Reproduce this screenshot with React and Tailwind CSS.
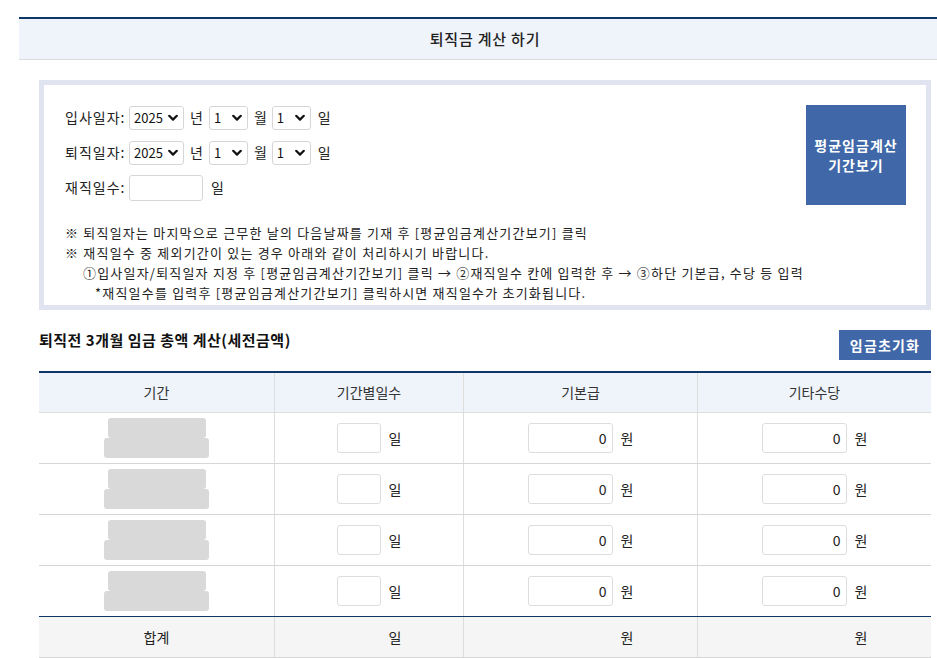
import { useState } from 'react'

const Chevron = () => (
    <svg className="pointer-events-none absolute right-[6px] top-1/2 -translate-y-1/2" width="10" height="7" viewBox="0 0 10 7">
        <path d="M1.2 1.3 L5 5.1 L8.8 1.3" fill="none" stroke="#111" strokeWidth="2.2" strokeLinecap="round" strokeLinejoin="round" />
    </svg>
)

const Select = ({ value, options, w }) => (
    <div className={`relative ${w} h-[24px]`}>
        <select
            defaultValue={value}
            className="appearance-none w-full h-full border border-[#d6d6d6] rounded-[3px] bg-white pl-[4px] text-[13px] text-[#111] leading-none focus:outline-none"
        >
            {options.map((o) => (
                <option key={o} value={o}>{o}</option>
            ))}
        </select>
        <Chevron />
    </div>
)

const years = ['2025', '2024', '2023']
const nums = Array.from({ length: 12 }, (_, i) => String(i + 1))

const DateRow = ({ label }) => (
    <div className="flex items-center h-[35px] text-[14px] text-[#222]">
        <span className="w-[64px] tracking-[1px]">{label}</span>
        <Select value="2025" options={years} w="w-[55px]" />
        <span className="mx-[6px]">년</span>
        <Select value="1" options={nums} w="w-[39px]" />
        <span className="ml-[6px] mr-[5px]">월</span>
        <Select value="1" options={nums} w="w-[39px]" />
        <span className="ml-[7px]">일</span>
    </div>
)

const Blob = () => (
    <div className="flex flex-col items-center">
        <div className="w-[98px] h-[20px] bg-[#d9d9d9] rounded-[3px]" />
        <div className="w-[105px] h-[20px] bg-[#d9d9d9] rounded-[3px]" />
    </div>
)

const MoneyCell = () => (
    <div className="flex items-center justify-center border-l border-[#dddddd]">
        <input
            defaultValue="0"
            className="w-[85px] h-[30px] border border-[#dddddd] rounded-[3px] text-right pr-[5px] text-[14px] text-[#222] focus:outline-none"
        />
        <span className="ml-[8px] text-[14px] text-[#222]">원</span>
    </div>
)

const App = () => {
    const [days, setDays] = useState('')
    const rows = [0, 1, 2, 3]

    return (
        <div className="w-[937px] h-[658px] overflow-hidden bg-white font-['Noto_Sans_CJK_KR','Noto_Sans',sans-serif]">
            <div className="ml-[19px] w-[932px] pt-[17px]">
                {/* 제목 */}
                <div className="h-[43px] border-t-2 border-b border-t-[#0c3766] border-b-[#dcdcdc] bg-[#eff3fa] flex items-center justify-center text-[15px] font-medium tracking-[0.8px] text-[#222]">
                    퇴직금 계산 하기
                </div>

                <div className="px-[20px] pt-[20px]">
                    {/* 입력 박스 */}
                    <div className="h-[230px] border-[5px] border-[#e0e4f1] flex justify-between pl-[21px] pr-[20px] pt-[15px]">
                        <div>
                            <DateRow label="입사일자:" />
                            <DateRow label="퇴직일자:" />
                            <div className="flex items-center h-[35px] text-[14px] text-[#222]">
                                <span className="w-[64px] tracking-[1px]">재직일수:</span>
                                <input
                                    value={days}
                                    onChange={(e) => setDays(e.target.value)}
                                    className="w-[74px] h-[26px] border border-[#d6d6d6] rounded-[3px] focus:outline-none"
                                />
                                <span className="ml-[8px]">일</span>
                            </div>

                            <div className="mt-[18px] text-[13px] leading-[20px] text-[#222] tracking-[1.2px] whitespace-nowrap">
                                <p>※ 퇴직일자는 마지막으로 근무한 날의 다음날짜를 기재 후 [평균임금계산기간보기] 클릭</p>
                                <p>※ 재직일수 중 제외기간이 있는 경우 아래와 같이 처리하시기 바랍니다.</p>
                                <p className="pl-[18px]">①입사일자/퇴직일자 지정 후 [평균임금계산기간보기] 클릭 → ②재직일수 칸에 입력한 후 → ③하단 기본급, 수당 등 입력</p>
                                <p className="pl-[30px]">*재직일수를 입력후 [평균임금계산기간보기] 클릭하시면 재직일수가 초기화됩니다.</p>
                            </div>
                        </div>

                        <button className="mt-[5px] w-[100px] h-[100px] bg-[#4068a9] text-white text-[14px] font-bold leading-[20px] tracking-[1px] shrink-0">
                            평균임금계산<br />기간보기
                        </button>
                    </div>

                    {/* 임금 총액 */}
                    <div className="mt-[20px] flex justify-between items-start">
                        <h2 className="text-[15px] font-bold leading-[20px] tracking-[0.5px] text-[#111]">퇴직전 3개월 임금 총액 계산(세전금액)</h2>
                        <button className="w-[92px] h-[30px] bg-[#4068a9] text-white text-[14px] font-bold tracking-[1.2px]">임금초기화</button>
                    </div>

                    <div className="mt-[11px] border-t-2 border-[#0c3766] text-[14px]">
                        <div className="grid grid-cols-[235px_189px_234px_234px] h-[40px] bg-[#eff3fa] border-b border-[#dddddd] text-[#333]">
                            <div className="flex items-center justify-center">기간</div>
                            <div className="flex items-center justify-center border-l border-[#dddddd]">기간별일수</div>
                            <div className="flex items-center justify-center border-l border-[#dddddd]">기본급</div>
                            <div className="flex items-center justify-center border-l border-[#dddddd]">기타수당</div>
                        </div>

                        {rows.map((r) => (
                            <div
                                key={r}
                                className={`grid grid-cols-[235px_189px_234px_234px] ${r < 3 ? 'h-[51px] border-b border-[#d6d6d6]' : 'h-[50px]'}`}
                            >
                                <div className="flex items-center justify-center">
                                    <Blob />
                                </div>
                                <div className="flex items-center justify-center border-l border-[#dddddd]">
                                    <input className="w-[44px] h-[30px] border border-[#dddddd] rounded-[3px] focus:outline-none" />
                                    <span className="ml-[8px] text-[#222]">일</span>
                                </div>
                                <MoneyCell />
                                <MoneyCell />
                            </div>
                        ))}

                        <div className="grid grid-cols-[235px_189px_234px_234px] h-[42px] bg-[#f5f5f5] border-t border-b border-t-[#0c3766] border-b-[#d6d6d6] text-[#222]">
                            <div className="flex items-center justify-center">합계</div>
                            <div className="flex items-center justify-center border-l border-[#dddddd]">
                                <span className="w-[44px]" />
                                <span className="ml-[8px]">일</span>
                            </div>
                            <div className="flex items-center justify-center border-l border-[#dddddd]">
                                <span className="w-[85px]" />
                                <span className="ml-[8px]">원</span>
                            </div>
                            <div className="flex items-center justify-center border-l border-[#dddddd]">
                                <span className="w-[85px]" />
                                <span className="ml-[8px]">원</span>
                            </div>
                        </div>
                    </div>
                </div>
            </div>
        </div>
    )
}

export default App
